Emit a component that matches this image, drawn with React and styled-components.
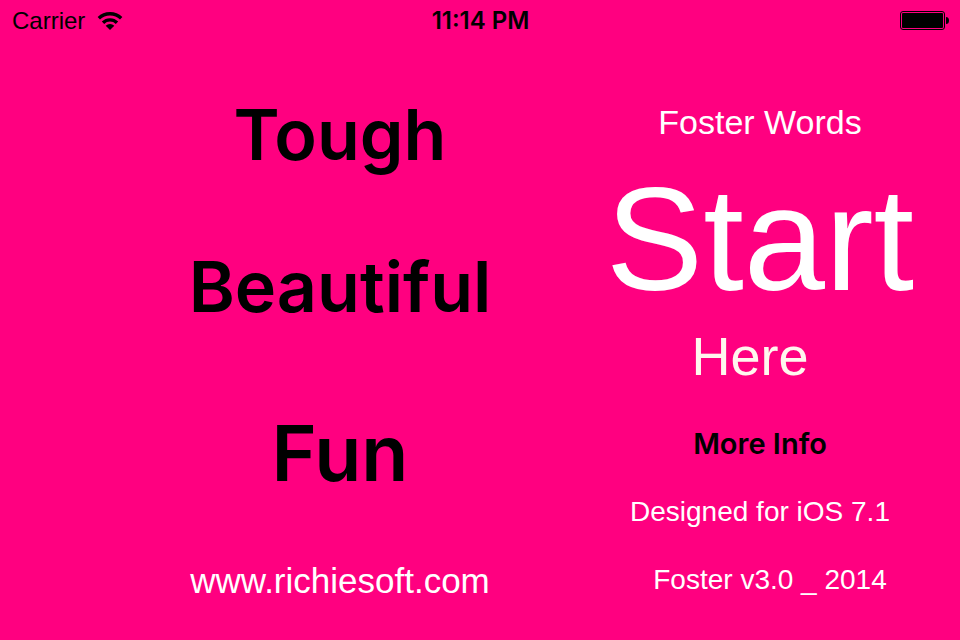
import React from "react";
import styled, { createGlobalStyle } from "styled-components";

const Global = createGlobalStyle`
  * { box-sizing: border-box; }
  body { margin: 0; background: #ff0080; font-family: "Liberation Sans", Arial, sans-serif; }
`;

const Screen = styled.div`
  min-height: 100vh;
  display: flex;
  flex-direction: column;
  background: #ff0080;
  color: #fff;
`;

const StatusBar = styled.header`
  display: grid;
  grid-template-columns: 1fr auto 1fr;
  align-items: center;
  height: 41px;
  padding: 0 11px 0 12px;
  color: #000;
  font-size: 24px;
  line-height: 29px;
`;

const Carrier = styled.div`
  display: flex;
  align-items: center;
  gap: 12px;
`;

const Clock = styled.time`
  font-family: Inter, "Liberation Sans", sans-serif;
  font-size: 24px;
  font-weight: 600;
`;

const Battery = styled.svg`
  justify-self: end;
`;

const Main = styled.main`
  flex: 1;
  display: grid;
  grid-template-columns: minmax(0, 11fr) minmax(0, 10fr);
  padding-left: 12.5%;
`;

const Column = styled.section`
  display: flex;
  flex-direction: column;
  align-items: center;
`;

const TextButton = styled.button`
  border: 0;
  padding: 0;
  background: none;
  color: ${(p) => (p.$dark ? "#000" : "#fff")};
  font-family: ${(p) => (p.$dark ? 'Inter, "Liberation Sans"' : '"Liberation Sans"')}, sans-serif;
  font-size: ${(p) => p.$size}px;
  font-weight: ${(p) => (p.$dark ? 600 : 400)};
  line-height: ${(p) => p.$line}px;
  margin-top: ${(p) => p.$gap}px;
  white-space: nowrap;
  cursor: pointer;
`;

const Label = styled.p`
  margin: ${(p) => p.$gap}px 0 0;
  padding-left: ${(p) => (p.$lean === "right" ? 20 : 0)}px;
  padding-right: ${(p) => (p.$lean === "left" ? 20 : 0)}px;
  color: ${(p) => (p.$cream ? "#fff7ee" : "#fff")};
  font-size: ${(p) => p.$size}px;
  line-height: ${(p) => p.$line}px;
  white-space: nowrap;
`;

const SiteLink = styled.a`
  margin-top: 64px;
  color: #fff;
  font-size: 35px;
  line-height: 40px;
  text-decoration: none;
`;

export default function App() {
  return (
    <Screen>
      <Global />
      <StatusBar>
        <Carrier>
          Carrier
          <svg width="26" height="18" viewBox="0 0 26 18" fill="none" stroke="#000" strokeWidth="3.400" aria-label="Wi-Fi">
            <path d="M1.800 6.300a16 16 0 0 1 22.400 0M6 10.700a10 10 0 0 1 14 0" />
            <path d="M13 18L8.700 13.700a6 6 0 0 1 8.600 0z" fill="#000" stroke="none" />
          </svg>
        </Carrier>
        <Clock>11:14 PM</Clock>
        <Battery width="49" height="19" viewBox="0 0 49 19" aria-label="Battery full">
          <rect x="0.500" y="0.500" width="44" height="18" rx="2.500" fill="none" stroke="#000" />
          <rect x="2" y="2" width="41" height="15" rx="1" />
          <path d="M46 6q3 0 3 3.500t-3 3.500z" />
        </Battery>
      </StatusBar>
      <Main>
        <Column>
          <TextButton $dark $size={70} $line={88} $gap={50}>Tough</TextButton>
          <TextButton $dark $size={70} $line={88} $gap={64}>Beautiful</TextButton>
          <TextButton $dark $size={77} $line={88} $gap={78}>Fun</TextButton>
          <SiteLink href="http://www.richiesoft.com">www.richiesoft.com</SiteLink>
        </Column>
        <Column>
          <Label $size={34} $line={40} $gap={61}>Foster Words</Label>
          <TextButton $size={146} $line={168} $gap={14}>Start</TextButton>
          <Label $size={54} $line={64} $gap={0} $lean="left" $cream>Here</Label>
          <TextButton $dark $size={29} $line={40} $gap={36}>More Info</TextButton>
          <Label $size={28} $line={32} $gap={32}>Designed for iOS 7.1</Label>
          <Label $size={28} $line={32} $gap={36} $lean="right">Foster v3.0 _ 2014</Label>
        </Column>
      </Main>
    </Screen>
  );
}
